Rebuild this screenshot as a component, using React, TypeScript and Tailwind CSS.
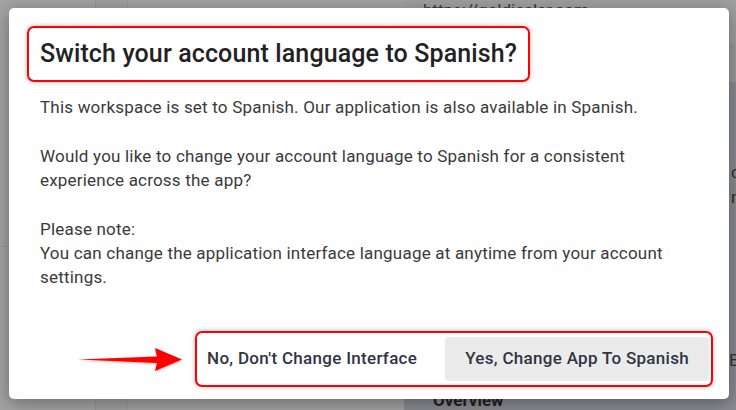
import React from "react";

export default function App() {
  return (
    <div className="relative w-[736px] h-[410px] overflow-hidden font-['Roboto',sans-serif]">
      {/* background page under overlay */}
      <div className="flex h-full w-full">
        <div className="w-[96px] shrink-0 h-full bg-[#a3a3a3] border-r border-[#969696] flex flex-col">
          <div className="h-[247px] border-b border-[#979797]" />
        </div>
        <div className="w-[32px] shrink-0 h-full bg-[#a0a0a0] border-r border-[#999999]" />
        <div className="w-[276px] shrink-0 h-full bg-[#a3a3a3]" />
        <div className="flex-1 min-w-0 h-full flex flex-col bg-[#8a8a92] overflow-hidden">
          <div className="h-[43px] shrink-0 bg-[#9f9f9f] pl-[19px]">
            <div className="mt-[0px] text-[17px] leading-[20px] whitespace-nowrap text-[#3a3a3a]">https://goldiesler.com</div>
          </div>
          <div className="h-[39px] shrink-0 bg-[#999999]" />
          <div className="flex-1">
            <div className="pl-[327px] pt-[78px] text-[17px] leading-[25px] whitespace-nowrap text-[#2f2a22]">
              <div>d</div>
              <div>ny</div>
            </div>
            <div className="pl-[325px] pt-[140px] text-[17px] leading-[20px] whitespace-nowrap text-[#333]">B</div>
            <div className="pl-[29px] pt-[20px] text-[17px] font-bold leading-[20px] whitespace-nowrap text-[#222]">Overview</div>
          </div>
        </div>
      </div>

      {/* modal dialog */}
      <div className="absolute left-[9px] top-[8px] w-[720px] h-[391px] bg-white rounded-[5px] shadow-[0_4px_18px_rgba(0,0,0,0.35)] flex flex-col">
        <div className="pl-[18px] pt-[18px]">
          <div className="inline-flex items-center h-[56px] px-[11px] border-2 border-[#ff0000] rounded-[7px] shadow-[0_0_5px_rgba(0,0,0,0.3)]">
            <span className="text-[25px] font-medium tracking-[0.12px] text-[#222222] whitespace-nowrap">Switch your account language to Spanish?</span>
          </div>
        </div>
        <div className="pl-[31px] pr-[31px] mt-[13px] text-[17px] leading-[24px] tracking-[0.2px] text-[#3a3a3a]">
          <p>This workspace is set to Spanish. Our application is also available in Spanish.</p>
          <p className="mt-[25px]">Would you like to change your account language to Spanish for a consistent experience across the app?</p>
          <p className="mt-[25px]">Please note:</p>
          <p>You can change the application interface language at anytime from your account settings.</p>
        </div>
        <div className="mt-auto mb-[12px] mr-[16px] flex justify-end">
          <div className="flex items-center pl-[10px] pr-[2px] py-[4px] border-2 border-[#ff0000] rounded-[7px] shadow-[0_0_5px_rgba(0,0,0,0.3)]">
            <button className="mr-[28px] text-[17px] font-medium tracking-[0.3px] text-[#2f3542] bg-white whitespace-nowrap">No, Don&apos;t Change Interface</button>
            <button className="h-[44px] px-[20px] rounded-[4px] bg-[#ebebeb] text-[17px] font-medium tracking-[0.3px] text-[#2f3542] whitespace-nowrap">Yes, Change App To Spanish</button>
          </div>
        </div>
      </div>

      {/* annotation arrow */}
      <svg className="absolute left-0 top-0" width="736" height="410" viewBox="0 0 736 410">
        <defs>
          <filter id="ash" x="-20%" y="-50%" width="140%" height="200%">
            <feDropShadow dx="0" dy="1" stdDeviation="1.2" floodColor="#000" floodOpacity="0.3" />
          </filter>
        </defs>
        <path d="M78 359.5 L157 356.5 L155 348 L182 359.5 L155 371 L157 363 Z" fill="#ff0000" filter="url(#ash)" />
      </svg>
    </div>
  );
}
